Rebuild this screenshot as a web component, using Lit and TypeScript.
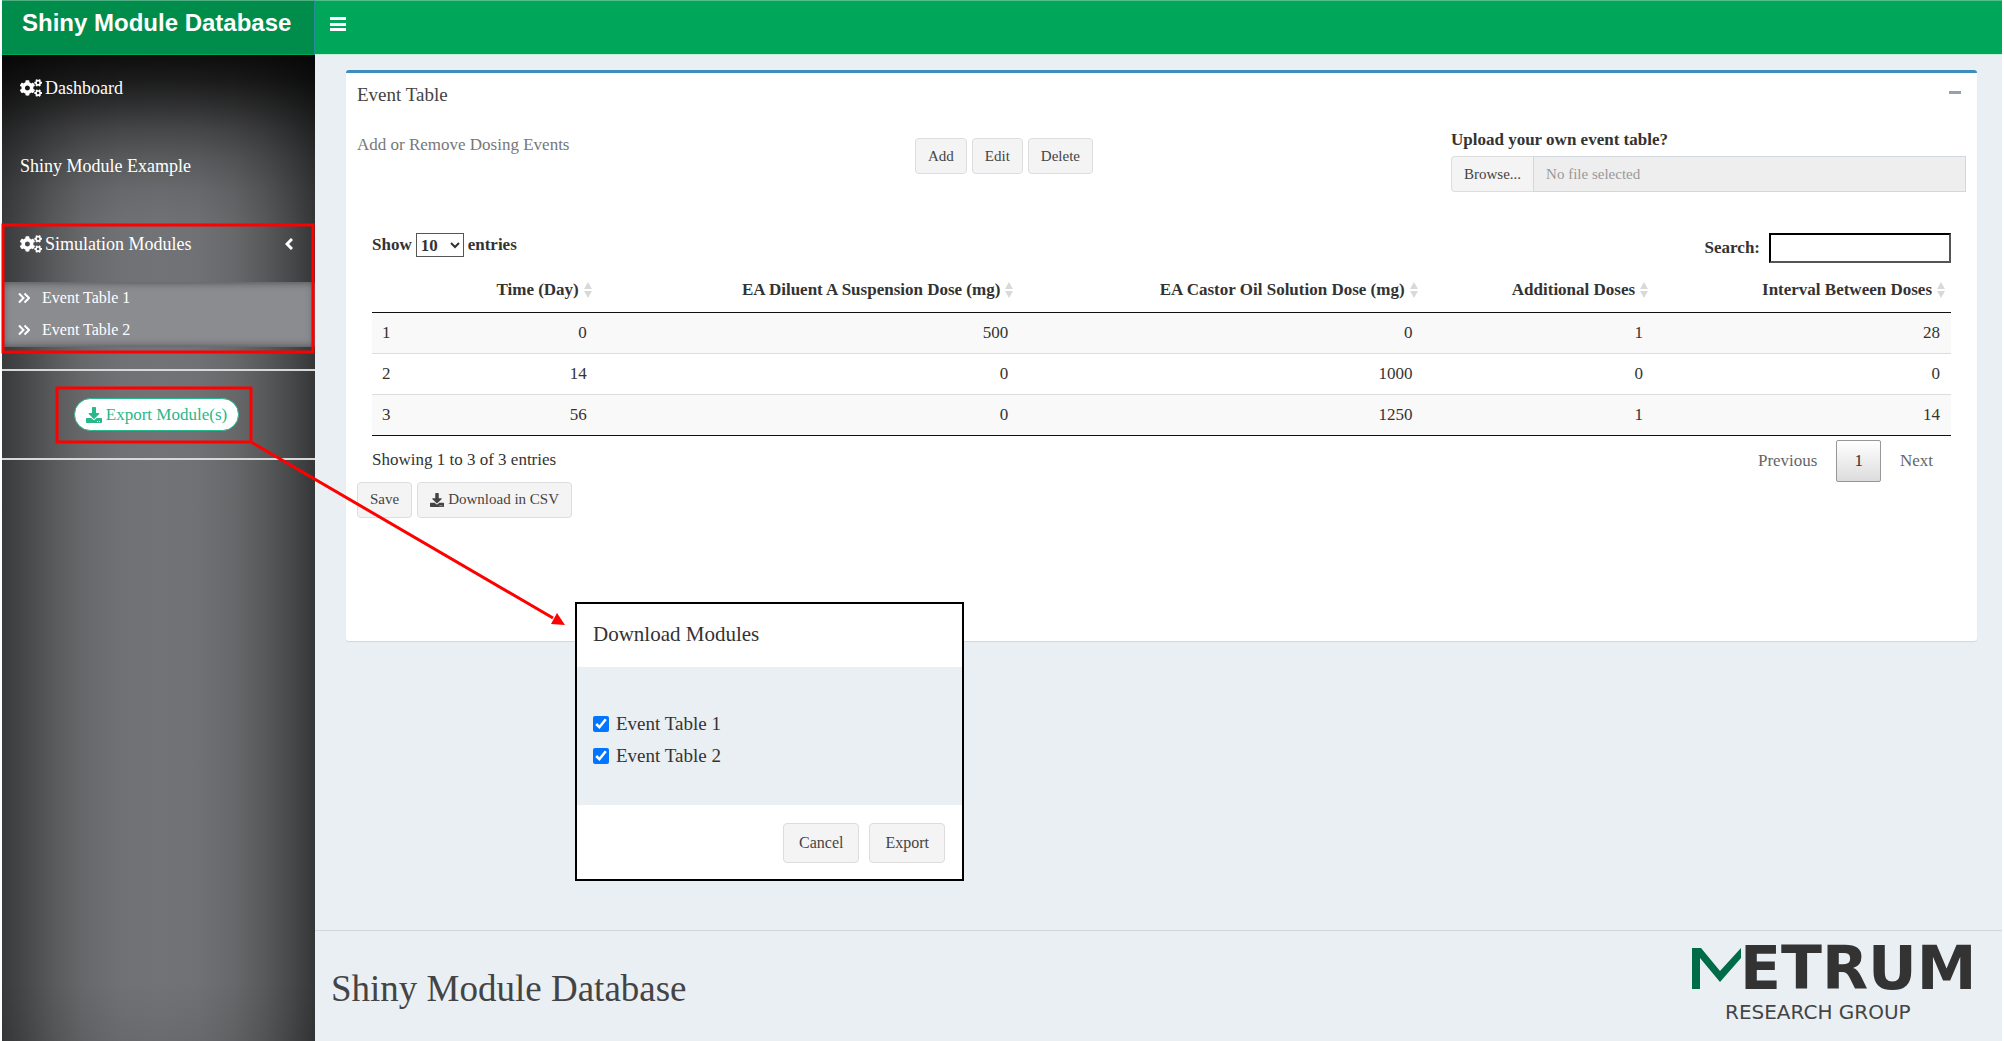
import { LitElement, html, css, svg } from "lit";
import { customElement, state } from "lit/decorators.js";

const COG_LARGE =
  "M386.3 286.1l33.7 16.8c10.1 5.8 14.5 18.1 10.5 29.1-8.9 24.2-26.4 46.4-42.6 65.8-7.4 8.9-20.2 11.1-30.3 5.3l-29.1-16.8c-16 13.7-34.6 24.6-54.9 31.7v33.6c0 11.6-8.3 21.6-19.7 23.6-24.6 4.2-50.4 4.4-75.9 0-11.5-2-20-11.9-20-23.6V418c-20.3-7.2-38.9-18-54.9-31.7L74 403c-10 5.8-22.9 3.6-30.3-5.3-16.2-19.4-33.3-41.6-42.2-65.7-4-10.9.4-23.2 10.5-29.1l33.3-16.8c-3.9-20.9-3.9-42.4 0-63.4L12 205.8c-10.1-5.8-14.6-18.1-10.5-29 8.9-24.2 26-46.4 42.2-65.8 7.4-8.9 20.2-11.1 30.3-5.3l29.1 16.8c16-13.7 34.6-24.6 54.9-31.7V57.1c0-11.5 8.2-21.5 19.6-23.5 24.6-4.2 50.5-4.4 76-.1 11.5 2 20 11.9 20 23.6v33.6c20.3 7.2 38.9 18 54.9 31.7l29.1-16.8c10-5.8 22.9-3.6 30.3 5.3 16.2 19.4 33.2 41.6 42.1 65.8 4 10.9.1 23.2-10 29.1l-33.7 16.8c3.9 21 3.9 42.5 0 63.5zm-117.6 21.1c59.2-77-28.7-164.9-105.7-105.7-59.2 77 28.7 164.9 105.7 105.7z";
const COG_SMALL =
  "M512.1 191l-8.2 14.3c-3 5.3-9.4 7.5-15.1 5.4-11.8-4.4-22.6-10.7-32.1-18.6-4.6-3.8-5.8-10.5-2.8-15.7l8.2-14.3c-6.9-8-12.3-17.3-15.9-27.4h-16.5c-6 0-11.2-4.3-12.2-10.3-2-12-2.1-24.6 0-37.1 1-6 6.2-10.4 12.2-10.4h16.5c3.6-10.1 9-19.4 15.9-27.4l-8.2-14.3c-3-5.2-1.9-11.9 2.8-15.7 9.5-7.9 20.4-14.2 32.1-18.6 5.7-2.1 12.1.1 15.1 5.4l8.2 14.3c10.5-1.9 21.2-1.9 31.7 0L552 6.3c3-5.3 9.4-7.5 15.1-5.4 11.8 4.4 22.6 10.7 32.1 18.6 4.6 3.8 5.8 10.5 2.8 15.7l-8.2 14.3c6.9 8 12.3 17.3 15.9 27.4h16.5c6 0 11.2 4.3 12.2 10.3 2 12 2.1 24.6 0 37.1-1 6-6.2 10.4-12.2 10.4h-16.5c-3.6 10.1-9 19.4-15.9 27.4l8.2 14.3c3 5.2 1.9 11.9-2.8 15.7-9.5 7.9-20.4 14.2-32.1 18.6-5.7 2.1-12.1-.1-15.1-5.4l-8.2-14.3c-10.4 1.9-21.2 1.9-31.7 0zm-10.5-58.8c38.5 29.6 82.4-14.3 52.8-52.8-38.5-29.7-82.4 14.3-52.8 52.8z";
const DOWNLOAD =
  "M216 0h80c13.3 0 24 10.7 24 24v168h87.7c17.8 0 26.7 21.5 14.1 34.1L269.7 378.3c-7.5 7.5-19.8 7.5-27.3 0L90.1 226.1c-12.6-12.6-3.7-34.1 14.1-34.1H192V24c0-13.3 10.7-24 24-24zm296 376v112c0 13.3-10.7 24-24 24H24c-13.3 0-24-10.7-24-24V376c0-13.3 10.7-24 24-24h146.7l49 49c20.1 20.1 52.5 20.1 72.6 0l49-49H488c13.3 0 24 10.7 24 24zm-124 88c0-11-9-20-20-20s-20 9-20 20 9 20 20 20 20-9 20-20zm64 0c0-11-9-20-20-20s-20 9-20 20 9 20 20 20 20-9 20-20z";

const cogs = html`<svg class="cogs" viewBox="0 0 640 512" aria-hidden="true">
  ${svg`<path d=${COG_LARGE} /><path d=${COG_SMALL} /><path d=${COG_SMALL} transform="translate(0 299)" />`}
</svg>`;
const download = html`<svg class="download" viewBox="0 0 512 512" aria-hidden="true"><path d=${DOWNLOAD} /></svg>`;
const doubleRight = html`<svg class="double-right" viewBox="0 0 12 12" aria-hidden="true">
  <path d="M1 1.5 L5.5 6 L1 10.5 M6.5 1.5 L11 6 L6.5 10.5" />
</svg>`;
const sortIcon = html`<svg class="sort" viewBox="0 0 8 16" aria-hidden="true">
  <path d="M4 0 L8 7 H0 Z M0 9 H8 L4 16 Z" />
</svg>`;

const COLUMNS = [
  "Time (Day)",
  "EA Diluent A Suspension Dose (mg)",
  "EA Castor Oil Solution Dose (mg)",
  "Additional Doses",
  "Interval Between Doses",
];

const ROWS = [
  [0, 500, 0, 1, 28],
  [14, 0, 1000, 0, 0],
  [56, 0, 1250, 1, 14],
];

const MODULES = ["Event Table 1", "Event Table 2"];

@customElement("app-root")
export class AppRoot extends LitElement {
  @state() private chosen = new Set(MODULES);

  static styles = css`
    :host {
      display: block;
      position: relative;
      box-sizing: border-box;
      padding: 0 2px;
      background: #fff;
      color: #333;
      font: 17px/24px "Liberation Serif", "Times New Roman", serif;
    }
    *,
    *::before,
    *::after {
      box-sizing: border-box;
    }
    button,
    input,
    select {
      font-family: inherit;
      margin: 0;
    }
    a {
      color: inherit;
      text-decoration: none;
    }
    h1,
    h2,
    ul {
      margin: 0;
      padding: 0;
      font-weight: normal;
      list-style: none;
    }
    .page {
      display: grid;
      grid-template-columns: 313px 1fr;
      grid-template-rows: auto 1fr;
      min-height: 100vh;
    }
    .brand,
    .topbar {
      height: 55px;
      border-top: 1px solid #4fbf8b;
      border-bottom: 1px solid #c4ecd9;
      background: #00a65a;
    }
    .brand {
      padding: 0 20px;
      border-top-color: #4daf82;
      border-right: 1px solid #2b8a9c;
      border-bottom-color: #00a65a;
      background: #008d4c;
      color: #fff;
      font: bold 24px/44px "Liberation Sans", Arial, sans-serif;
      white-space: nowrap;
    }
    .topbar {
      display: flex;
      align-items: flex-start;
      padding: 15px;
    }
    .toggle {
      display: block;
      padding: 0;
      border: 0;
      background: none;
      line-height: 0;
    }
    .bars {
      width: 16px;
      height: 16px;
      fill: #fff;
    }
    .sidebar {
      padding-top: 21px;
      background:
        linear-gradient(
          to bottom,
          rgba(0, 0, 0, 0.88) 0,
          rgba(0, 0, 0, 0.76) 25px,
          rgba(0, 0, 0, 0.58) 50px,
          rgba(0, 0, 0, 0.38) 75px,
          rgba(0, 0, 0, 0.21) 103px,
          rgba(0, 0, 0, 0.08) 135px,
          rgba(0, 0, 0, 0) 175px
        ),
        linear-gradient(to top, rgba(0, 0, 0, 0.07), rgba(0, 0, 0, 0) 60px),
        linear-gradient(
          to right,
          #393a3b 0,
          #48494b 8%,
          #58595b 16%,
          #67686a 26%,
          #707174 38%,
          #727376 50%,
          #707174 62%,
          #67686a 74%,
          #58595b 84%,
          #48494b 92%,
          #353637 100%
        );
      color: #fff;
      font-size: 18px;
    }
    .menu {
      display: flex;
      flex-direction: column;
      gap: 54px;
    }
    .menu-link {
      display: flex;
      align-items: center;
      gap: 3px;
      padding: 0 22px 0 18px;
    }
    .menu-link .spring {
      flex: 1;
    }
    .cogs {
      width: 22px;
      height: 18px;
      fill: #fff;
    }
    .chevron {
      width: 8px;
      height: 12px;
      fill: none;
      stroke: #fff;
      stroke-width: 3;
    }
    .submenu {
      margin-top: 26px;
      padding: 0 0 1px;
      background: #8b8c90;
      box-shadow: inset 0 0 8px #444;
      font-size: 16px;
      line-height: 32px;
    }
    .submenu a {
      display: flex;
      align-items: center;
      gap: 12px;
      padding-left: 16px;
    }
    .double-right {
      width: 12px;
      height: 12px;
      fill: none;
      stroke: #fff;
      stroke-width: 2;
    }
    .export-area {
      display: flex;
      justify-content: center;
      margin-top: 22px;
      padding: 27px 4px 27px 0;
      border-top: 2px solid #d8d8d8;
      border-bottom: 2px solid #d8d8d8;
    }
    .export {
      display: flex;
      align-items: center;
      gap: 4px;
      height: 33px;
      padding: 0 11px;
      border: 1px solid #29b78c;
      border-radius: 17px;
      background: #fff;
      color: #29b78c;
      font-size: 17px;
    }
    .download {
      width: 16px;
      height: 16px;
      fill: currentColor;
    }
    .main {
      display: flex;
      flex-direction: column;
      background: #eaeff3;
    }
    .content {
      flex: 1;
      padding: 15px 25px 15px 31px;
    }
    .box {
      padding: 0 11px 123px;
      border-top: 3px solid #3c8dbc;
      border-radius: 3px;
      background: #fff;
      box-shadow: 0 1px 1px rgba(0, 0, 0, 0.1);
    }
    .box-header {
      display: flex;
      justify-content: space-between;
      align-items: center;
      height: 43px;
      color: #444;
    }
    .box-header h2 {
      font-size: 19px;
    }
    .collapse {
      width: 12px;
      height: 12px;
      margin-right: 5px;
      padding: 0;
      border: 0;
      background: linear-gradient(#97a0b3, #97a0b3) 0 2px / 100% 3px no-repeat;
    }
    .tools {
      display: grid;
      grid-template-columns: 558fr 536fr 515fr;
      align-items: start;
      padding-top: 12px;
    }
    .hint {
      padding-top: 5px;
      color: #777;
    }
    .buttons {
      display: flex;
      gap: 5px;
    }
    .tools .buttons {
      padding-top: 10px;
    }
    .button {
      display: flex;
      align-items: center;
      gap: 4px;
      height: 36px;
      padding: 0 12px;
      border: 1px solid #ddd;
      border-radius: 4px;
      background: #f4f4f4;
      color: #444;
      font-size: 15px;
      white-space: nowrap;
    }
    .button .download {
      width: 14px;
      height: 14px;
    }
    .upload-title {
      display: block;
      height: 28px;
      font-weight: bold;
    }
    .upload {
      display: flex;
    }
    .upload .button {
      border-right: 0;
      border-radius: 4px 0 0 4px;
    }
    .file {
      display: none;
    }
    .file-name {
      flex: 1;
      min-width: 0;
      height: 36px;
      padding: 0 12px;
      border: 1px solid #d2d6de;
      background: #eee;
      font-size: 15px;
    }
    .file-name::placeholder {
      color: #999;
    }
    .table-area {
      padding: 41px 15px 0;
    }
    .table-top,
    .table-bottom {
      display: flex;
      justify-content: space-between;
      align-items: flex-start;
    }
    .table-top {
      height: 36px;
      font-weight: bold;
    }
    .length,
    .search {
      display: flex;
      align-items: center;
    }
    .length {
      gap: 4px;
    }
    .search {
      gap: 9px;
    }
    .length select {
      width: 48px;
      height: 24px;
      padding: 0;
      border: 1px solid #555;
      border-radius: 0;
      background: #fff;
      color: #333;
      font-size: 17px;
      font-weight: bold;
    }
    .search input {
      width: 182px;
      height: 30px;
      border: 2px inset #555;
      background: #fff;
      font-size: 17px;
    }
    .table {
      width: 100%;
      table-layout: fixed;
      border-collapse: collapse;
      border-bottom: 1px solid #111;
    }
    .table th {
      height: 43px;
      padding: 0 6px 1px 0;
      border-bottom: 1px solid #111;
      text-align: right;
      white-space: nowrap;
    }
    .table td {
      height: 41px;
      padding: 0 11px 0 10px;
      border-top: 1px solid #ddd;
      text-align: right;
    }
    .table tbody tr:first-child td {
      border-top: 0;
    }
    .table tbody tr:nth-child(odd) {
      background: #f9f9f9;
    }
    .table td:first-child {
      text-align: left;
    }
    .col-index {
      width: 2.6%;
    }
    .col-1 {
      width: 11.7%;
    }
    .col-2 {
      width: 26.7%;
    }
    .col-3 {
      width: 25.6%;
    }
    .col-4 {
      width: 14.6%;
    }
    .sort {
      width: 8px;
      height: 16px;
      margin-left: 5px;
      fill: #d9d9d9;
      vertical-align: -3px;
    }
    .table-bottom {
      padding-top: 4px;
    }
    .info {
      padding-top: 8px;
    }
    .pages {
      display: flex;
      gap: 1px;
    }
    .page-button {
      height: 42px;
      padding: 0 17px;
      border: 1px solid transparent;
      border-radius: 2px;
      background: none;
      color: #666;
      font-size: 17px;
    }
    .page-button.current {
      border-color: #979797;
      background: linear-gradient(#fff, #dcdcdc);
      color: #333;
    }
    .footer {
      display: flex;
      justify-content: space-between;
      align-items: flex-start;
      height: 111px;
      padding: 0 8px 0 16px;
      border-top: 1px solid #d2d6de;
    }
    .footer h1 {
      padding-top: 34px;
      color: #444;
      font-size: 37px;
      line-height: 48px;
    }
    .metrum {
      width: 304px;
      height: 94px;
      font-family: "DejaVu Sans", sans-serif;
    }
    .modal {
      position: absolute;
      left: 575px;
      top: 602px;
      width: 389px;
      border: 2px solid #000;
      background: #fff;
    }
    .modal-title {
      padding: 17px 16px 20px;
      font-size: 21px;
      line-height: 26px;
    }
    .modal-body {
      display: flex;
      flex-direction: column;
      gap: 8px;
      padding: 45px 16px 37px;
      background: #eaeff3;
      font-size: 19px;
    }
    .choice {
      display: flex;
      align-items: center;
      gap: 7px;
    }
    .choice input {
      width: 16px;
      height: 16px;
      accent-color: #0075ff;
    }
    .modal-footer {
      display: flex;
      justify-content: flex-end;
      gap: 10px;
      padding: 18px 17px 16px;
    }
    .modal-footer .button {
      height: 40px;
      padding: 0 15px;
      font-size: 16px;
    }
    .callouts {
      position: absolute;
      left: 0;
      top: 0;
      width: 600px;
      height: 640px;
      pointer-events: none;
      fill: none;
      stroke: #f00;
      stroke-width: 3;
    }
    .callouts .head {
      fill: #f00;
      stroke: none;
    }
  `;

  private toggle(name: string) {
    const next = new Set(this.chosen);
    next.has(name) ? next.delete(name) : next.add(name);
    this.chosen = next;
  }

  private renderSidebar() {
    return html`<nav class="sidebar" aria-label="Modules">
      <ul class="menu">
        <li><a class="menu-link" href="#dashboard">${cogs}<span>Dashboard</span></a></li>
        <li><a class="menu-link" href="#example">Shiny Module Example</a></li>
        <li>
          <a class="menu-link" href="#simulation">
            ${cogs}<span>Simulation Modules</span><span class="spring"></span>
            <svg class="chevron" viewBox="0 0 8 12" aria-hidden="true"><path d="M7 1 L2 6 L7 11" /></svg>
          </a>
          <ul class="submenu">
            ${MODULES.map((name, i) => html`<li><a href="#event-table-${i + 1}">${doubleRight}${name}</a></li>`)}
          </ul>
        </li>
      </ul>
      <div class="export-area">
        <button class="export" type="button">${download}Export Module(s)</button>
      </div>
    </nav>`;
  }

  private renderTable() {
    return html`<div class="table-area">
      <div class="table-top">
        <div class="length">
          <label for="length">Show</label>
          <select id="length" aria-label="Show entries">
            <option>10</option>
            <option>25</option>
          </select>
          <span>entries</span>
        </div>
        <div class="search">
          <label for="search">Search:</label>
          <input id="search" type="search" />
        </div>
      </div>
      <table class="table">
        <thead>
          <tr>
            <th class="col-index"></th>
            ${COLUMNS.map((name, i) => html`<th class="col-${i + 1}" scope="col">${name}${sortIcon}</th>`)}
          </tr>
        </thead>
        <tbody>
          ${ROWS.map(
            (row, i) => html`<tr>
              <td>${i + 1}</td>
              ${row.map((value) => html`<td>${value}</td>`)}
            </tr>`
          )}
        </tbody>
      </table>
      <div class="table-bottom">
        <div class="info">Showing 1 to 3 of 3 entries</div>
        <div class="pages">
          <button class="page-button" type="button">Previous</button>
          <button class="page-button current" type="button">1</button>
          <button class="page-button" type="button">Next</button>
        </div>
      </div>
    </div>`;
  }

  private renderModal() {
    return html`<div class="modal" role="dialog" aria-labelledby="modal-title">
      <h2 class="modal-title" id="modal-title">Download Modules</h2>
      <div class="modal-body">
        ${MODULES.map(
          (name) => html`<label class="choice">
            <input type="checkbox" .checked=${this.chosen.has(name)} @change=${() => this.toggle(name)} />${name}
          </label>`
        )}
      </div>
      <div class="modal-footer">
        <button class="button" type="button">Cancel</button>
        <button class="button" type="button">Export</button>
      </div>
    </div>`;
  }

  render() {
    return html`
      <div class="page">
        <div class="brand">Shiny Module Database</div>
        <header class="topbar">
          <button class="toggle" type="button" aria-label="Toggle navigation">
            <svg class="bars" viewBox="0 0 16 16" aria-hidden="true">
              <path d="M0 1h16v3H0z M0 7h16v3H0z M0 12h16v3H0z" />
            </svg>
          </button>
        </header>
        ${this.renderSidebar()}
        <main class="main">
          <div class="content">
            <section class="box">
              <div class="box-header">
                <h2>Event Table</h2>
                <button class="collapse" type="button" aria-label="Collapse"></button>
              </div>
              <div class="tools">
                <div class="hint">Add or Remove Dosing Events</div>
                <div class="buttons">
                  <button class="button" type="button">Add</button>
                  <button class="button" type="button">Edit</button>
                  <button class="button" type="button">Delete</button>
                </div>
                <div>
                  <label class="upload-title" for="file">Upload your own event table?</label>
                  <div class="upload">
                    <label class="button">Browse...<input class="file" id="file" type="file" /></label>
                    <input class="file-name" type="text" placeholder="No file selected" aria-label="Selected file" readonly />
                  </div>
                </div>
              </div>
              ${this.renderTable()}
              <div class="buttons">
                <button class="button" type="button">Save</button>
                <button class="button" type="button">${download}Download in CSV</button>
              </div>
            </section>
          </div>
          <footer class="footer">
            <h1>Shiny Module Database</h1>
            <svg class="metrum" viewBox="0 -14 304 94" role="img" aria-label="Metrum Research Group">
              <path fill="#006b47" d="M2 3 H11 L30 26 L51 3 V13 L30 37 L10 13 V44 H2 Z" />
              <text x="50" y="44" font-size="60" font-weight="bold" fill="#333">ETRUM</text>
              <text x="35" y="74" font-size="20" fill="#444">RESEARCH GROUP</text>
            </svg>
          </footer>
        </main>
      </div>
      ${this.renderModal()}
      <svg class="callouts" viewBox="0 0 600 640" aria-hidden="true">
        <path d="M3 225 H313 V352 H3 Z M57 388 H251 V442 H57 Z M251 442 L553 618" />
        <path class="head" d="M565 625 L551 624 L557 613 Z" />
      </svg>
    `;
  }
}
